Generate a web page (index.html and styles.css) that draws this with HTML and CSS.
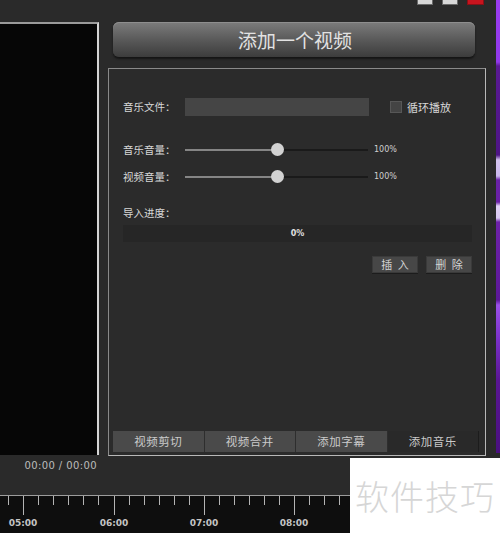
FILE: index.html
```html
<!DOCTYPE html>
<html lang="zh">
<head>
<meta charset="utf-8">
<link rel="stylesheet" href="styles.css">
</head>
<body>
<div class="app">
  <div class="winbtns">
    <span class="wb"></span><span class="wb"></span><span class="wb close"></span>
  </div>
  <div class="main">
    <div class="preview"></div>
    <div class="side">
      <div class="addbtn">添加一个视频</div>
      <div class="panel">
        <div class="row file">
          <span class="label">音乐文件：</span>
          <span class="input"></span>
          <span class="check"></span>
          <span class="checklabel">循环播放</span>
        </div>
        <div class="row slider first">
          <span class="label">音乐音量：</span>
          <span class="track"><span class="fill"></span><span class="thumb"></span></span>
          <span class="val">100%</span>
        </div>
        <div class="row slider">
          <span class="label">视频音量：</span>
          <span class="track"><span class="fill"></span><span class="thumb"></span></span>
          <span class="val">100%</span>
        </div>
        <div class="plabel">导入进度：</div>
        <div class="progress">0%</div>
        <div class="actions">
          <span class="btn">插 入</span>
          <span class="btn">删 除</span>
        </div>
        <div class="tabs">
          <span class="tab">视频剪切</span>
          <span class="tab">视频合并</span>
          <span class="tab">添加字幕</span>
          <span class="tab active">添加音乐</span>
        </div>
      </div>
    </div>
    <div class="purple"></div>
  </div>
  <div class="timebar"><span class="time">00:00 / 00:00</span></div>
  <div class="timeline">
    <svg width="500" height="38" viewBox="0 0 500 38">
      <g stroke="#b4b4b4" stroke-width="1">
        <line x1="8.5" y1="1" x2="8.5" y2="10"/>
        <line x1="23.5" y1="1" x2="23.5" y2="20"/>
        <line x1="38.5" y1="1" x2="38.5" y2="10"/>
        <line x1="53.5" y1="1" x2="53.5" y2="10"/>
        <line x1="68.5" y1="1" x2="68.5" y2="10"/>
        <line x1="83.5" y1="1" x2="83.5" y2="10"/>
        <line x1="98.5" y1="1" x2="98.5" y2="10"/>
        <line x1="114.5" y1="1" x2="114.5" y2="20"/>
        <line x1="129.5" y1="1" x2="129.5" y2="10"/>
        <line x1="144.5" y1="1" x2="144.5" y2="10"/>
        <line x1="159.5" y1="1" x2="159.5" y2="10"/>
        <line x1="174.5" y1="1" x2="174.5" y2="10"/>
        <line x1="189.5" y1="1" x2="189.5" y2="10"/>
        <line x1="204.5" y1="1" x2="204.5" y2="20"/>
        <line x1="219.5" y1="1" x2="219.5" y2="10"/>
        <line x1="234.5" y1="1" x2="234.5" y2="10"/>
        <line x1="249.5" y1="1" x2="249.5" y2="10"/>
        <line x1="264.5" y1="1" x2="264.5" y2="10"/>
        <line x1="279.5" y1="1" x2="279.5" y2="10"/>
        <line x1="294.5" y1="1" x2="294.5" y2="20"/>
        <line x1="309.5" y1="1" x2="309.5" y2="10"/>
        <line x1="324.5" y1="1" x2="324.5" y2="10"/>
        <line x1="339.5" y1="1" x2="339.5" y2="10"/>
      </g>
      <g fill="#c4c4c4" font-family="DejaVu Sans, sans-serif" font-size="9" font-weight="bold" text-anchor="middle">
        <text x="23" y="31">05:00</text>
        <text x="114" y="31">06:00</text>
        <text x="204" y="31">07:00</text>
        <text x="294" y="31">08:00</text>
      </g>
    </svg>
  </div>
  <div class="watermark">软件技巧</div>
</div>
</body>
</html>
```

FILE: styles.css
```css
* { box-sizing: border-box; }
html, body { margin: 0; padding: 0; }
body {
  width: 500px;
  height: 533px;
  overflow: hidden;
  background: #2a2a2a;
  font-family: "Noto Sans CJK SC", "Noto Sans", sans-serif;
  color: #cfcfcf;
}
.app {
  position: relative;
  width: 500px;
  height: 533px;
  background: #2a2a2a;
}
.winbtns {
  position: absolute;
  top: -1px;
  left: 417px;
  display: flex;
  gap: 9px;
}
.wb {
  display: block;
  width: 16px;
  height: 6px;
  background: #d8d8d8;
  border: 1px solid #6a6a6a;
}
.wb.close {
  width: 17px;
  background: #c8141e;
  border-color: #8a1016;
}
.main {
  display: flex;
  height: 457px;
}
.preview {
  margin-top: 22px;
  width: 99px;
  height: 433px;
  background: #060606;
  border-top: 2px solid #9a9a9a;
  border-right: 2px solid #d4d4d4;
}
.side {
  margin-left: 9px;
  width: 378px;
  padding-top: 22px;
  display: flex;
  flex-direction: column;
}
.addbtn {
  margin-left: 5px;
  width: 362px;
  height: 35px;
  border-radius: 6px;
  background: linear-gradient(#7c7c7c, #5a5a5a 50%, #3c3c3c);
  box-shadow: 0 2px 2px #151515, inset 0 1px 0 #8e8e8e;
  color: #e2e2e2;
  font-size: 19px;
  line-height: 35px;
  text-align: center;
  padding-left: 2px;
}
.panel {
  margin-top: 11px;
  width: 378px;
  height: 388px;
  border: 1px solid #b8b8b8;
  border-top-color: #8a8a8a;
  border-left-color: #8a8a8a;
  background: #2b2b2b;
  padding: 29px 13px 3px 14px;
  display: flex;
  flex-direction: column;
}
.row {
  display: flex;
  align-items: center;
  font-size: 10.5px;
  line-height: 14px;
}
.row.file { height: 18px; }
.label {
  width: 62px;
  flex: none;
  color: #d8d8d8;
  white-space: nowrap;
}
.input {
  width: 184px;
  height: 18px;
  background: #454545;
}
.check {
  margin-left: 21px;
  width: 12px;
  height: 12px;
  background: #444;
  border: 1px solid #575757;
}
.checklabel {
  margin-left: 5px;
  font-size: 11px;
  color: #d8d8d8;
}
.row.slider { height: 14px; margin-top: 13px; }
.row.slider.first { margin-top: 27px; }
.track {
  position: relative;
  width: 183px;
  height: 2px;
  background: #1a1a1a;
}
.fill {
  display: block;
  width: 92px;
  height: 2px;
  background: #858585;
}
.thumb {
  position: absolute;
  left: 86px;
  top: -6px;
  width: 13px;
  height: 13px;
  border-radius: 50%;
  background: #d2d2d2;
}
.val {
  margin-left: 6px;
  font-family: "DejaVu Sans", sans-serif;
  font-size: 8px;
  color: #d0d0d0;
}
.plabel {
  margin-top: 22px;
  height: 14px;
  font-size: 10.5px;
  line-height: 14px;
  color: #d8d8d8;
}
.progress {
  margin-top: 5px;
  height: 17px;
  background: #262626;
  text-align: center;
  font-family: "DejaVu Sans", sans-serif;
  font-size: 8px;
  font-weight: bold;
  line-height: 17px;
  color: #e0e0e0;
}
.actions {
  margin-top: 14px;
  display: flex;
  justify-content: flex-end;
  gap: 8px;
}
.btn {
  width: 46px;
  height: 17px;
  background: #474747;
  border: 1px solid #3a3a3a;
  box-shadow: 0 1px 0 #1c1c1c;
  font-size: 11px;
  line-height: 15px;
  text-align: center;
  color: #d4d4d4;
  word-spacing: 3px;
}
.tabs {
  margin: auto -7px 0 -10px;
  height: 21px;
  display: flex;
  background: #1e1e1e;
}
.tab {
  flex: 1;
  background: #4a4a4a;
  border-right: 1px solid #2e2e2e;
  font-size: 11.5px;
  line-height: 21px;
  text-align: center;
  color: #cacaca;
  letter-spacing: 0.5px;
}
.tab.active {
  background: #292929;
  border-right: 1px solid #1c1c1c;
}
.purple {
  margin-left: 10px;
  width: 4px;
  height: 453px;
  background: linear-gradient(#9a3cf0 0, #9038ea 62px, #5a1a94 66px, #4e1586 155px, #d4c4f0 160px, #cbb8ee 176px, #6a22a8 180px, #6a20a6 202px, #e0d0f4 206px, #d8c8f2 218px, #6e22aa 222px, #5c1898 300px, #9a50e8 305px, #7a30c8 340px, #5a1694 380px, #4a1080 453px);
}
.timebar {
  height: 38px;
  position: relative;
}
.time {
  position: absolute;
  right: 403px;
  top: 3px;
  font-family: "DejaVu Sans", sans-serif;
  font-size: 10px;
  letter-spacing: 0.4px;
  color: #bcbcbc;
}
.timeline {
  height: 38px;
  background: #0e0e0e;
  border-top: 1px solid #9c9c9c;
}
.timeline svg { display: block; margin-top: -1px; }
.watermark {
  position: absolute;
  left: 350px;
  top: 458px;
  width: 150px;
  height: 75px;
  background: #ffffff;
  color: #d6d6d6;
  font-size: 34px;
  font-weight: 300;
  line-height: 75px;
  padding-left: 5px;
  padding-bottom: 2px;
  white-space: nowrap;
  letter-spacing: 1px;
}
```
